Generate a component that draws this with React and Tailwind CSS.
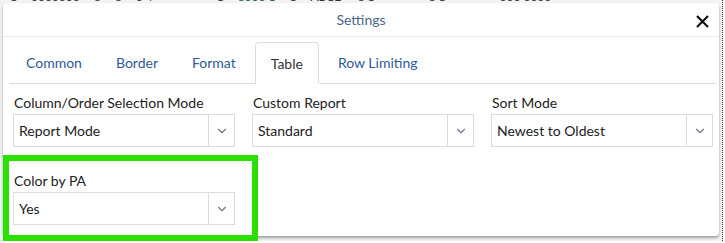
import { ChevronDown } from "lucide-react";

const FONT = { fontFamily: "Lato, 'Open Sans', sans-serif" };

const tabs = ["Common", "Border", "Format", "Table", "Row Limiting"];

const SelectBox = ({ value }) => (
  <div className="flex h-[33px] w-[222px] border border-[#dcdcdc] bg-white">
    <div className="flex flex-1 items-center pl-[5px] text-[14px] text-[#222]">{value}</div>
    <div className="flex w-[26px] items-center justify-center border-l border-[#dcdcdc]">
      <ChevronDown size={14} strokeWidth={2} className="text-[#6b7a8a]" />
    </div>
  </div>
);

const Field = ({ label, value }) => (
  <div className="flex flex-col">
    <div className="h-[19px] pl-[1px] text-[14px] leading-[16px] text-[#222]">{label}</div>
    <SelectBox value={value} />
  </div>
);

export default function App() {
  const active = "Table";

  return (
    <div className="relative h-[243px] w-[725px] overflow-hidden bg-white" style={FONT}>
      <div className="h-[241px] w-[723px] border-r border-dotted border-[#333] bg-[#f3f3f3]">
        {/* clipped row of the grid behind the dialog */}
        <div className="h-[3px] overflow-hidden">
          <div className="-mt-[12px] flex gap-[14px] whitespace-nowrap pl-[10px] text-[12px] text-[#333]">
            <span>1</span>
            <span>0000000</span>
            <span>8</span>
            <span>8</span>
            <span>0 4</span>
            <span className="pl-[50px]">1</span>
            <span className="text-[#1f5a45]">8000 1</span>
            <span>1</span>
            <span>ABCD</span>
            <span>8 1</span>
            <span className="pl-[40px]">8 1</span>
            <span className="pl-[40px]">000 0000</span>
          </div>
        </div>

        <div className="ml-[3px] h-[233px] w-[716px] rounded-[4px] bg-white shadow-[0_2px_3px_rgba(0,0,0,0.35)]">
          <div className="relative flex h-[34px] items-center justify-center border-b border-[#ececec]">
            <span className="text-[14px] text-[#4b6584]">Settings</span>
            <svg className="absolute right-[10px] top-[12px]" width="13" height="13" viewBox="0 0 13 13">
              <path d="M1 1 L12 12 M12 1 L1 12" stroke="#111" strokeWidth="2.2" />
            </svg>
          </div>

          <div className="ml-[6px] mr-[2px] mt-[6px] flex h-[41px] items-end border-b border-[#dddddd] pl-[2px]">
            {tabs.map((t) =>
              t === active ? (
                <div
                  key={t}
                  className="-mb-px mr-[4px] flex h-[42px] items-center rounded-t-[4px] border border-b-white border-[#dddddd] bg-white px-[15px] text-[14px] text-[#333]"
                >
                  {t}
                </div>
              ) : (
                <div key={t} className="mr-[4px] flex h-[41px] items-center px-[15px] text-[14px] text-[#2c5a97]">
                  {t}
                </div>
              )
            )}
          </div>

          <div className="ml-[10px] mt-[11px] grid grid-cols-[222px_222px_222px] gap-x-[17px] gap-y-[26px]">
            <Field label="Column/Order Selection Mode" value="Report Mode" />
            <Field label="Custom Report" value="Standard" />
            <Field label="Sort Mode" value="Newest to Oldest" />
            <Field label="Color by PA" value="Yes" />
          </div>
        </div>
      </div>

      {/* highlight annotation */}
      <div className="absolute left-[3px] top-[155px] h-[86px] w-[255px] border-[6px] border-[#2ae000]" />
    </div>
  );
}
